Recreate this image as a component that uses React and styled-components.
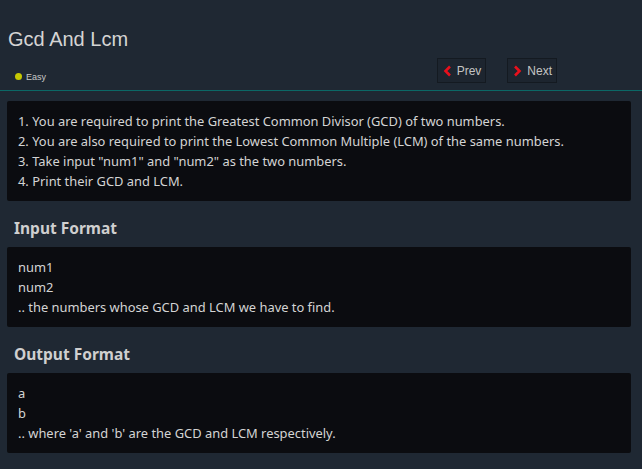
import React from "react";
import styled, { createGlobalStyle } from "styled-components";

const GlobalStyle = createGlobalStyle`
  body {
    margin: 0;
    background: #1f2833;
    font-family: "Noto Sans", "Open Sans", sans-serif;
  }
`;

const Page = styled.div`
  width: 642px;
  min-height: 469px;
  background: #1f2833;
  color: #d6d6d6;
`;

const Header = styled.div`
  padding: 27px 0 0 0;
`;

const Title = styled.h1`
  margin: 0 0 0 8px;
  font-family: "Liberation Sans", Arial, sans-serif;
  font-weight: 400;
  font-size: 20px;
  line-height: 24px;
  color: #d4d4d4;
`;

const MetaRow = styled.div`
  display: flex;
  align-items: center;
  justify-content: space-between;
  margin-top: 7px;
  padding: 0 85px 7px 15px;
  border-bottom: 1px solid #0b6866;
`;

const Level = styled.div`
  display: flex;
  align-items: center;
  gap: 4px;
  padding-top: 12px;
  font-family: "Liberation Sans", Arial, sans-serif;
  font-size: 9px;
  color: #c8c8c8;
`;

const Dot = styled.span`
  width: 7px;
  height: 7px;
  border-radius: 50%;
  background: ${(props) => props.color};
`;

const Nav = styled.div`
  display: flex;
  gap: 21px;
`;

const NavButton = styled.button`
  display: flex;
  align-items: center;
  gap: 5px;
  height: 25px;
  padding: 0 4px 0 5px;
  background: #1d252f;
  border: 1px solid #141a21;
  color: #c4c4c4;
  font-family: "Liberation Sans", Arial, sans-serif;
  font-size: 12px;
  cursor: pointer;
`;

const Content = styled.div`
  padding: 10px 11px 0 7px;
`;

const Box = styled.div`
  background: #0b0c10;
  border-radius: 2px;
  padding: 10px 11px;
  font-size: 12.9px;
  line-height: 20px;
  color: #d4d4d4;
`;

const Line = styled.div`
  white-space: nowrap;
`;

const Heading = styled.h3`
  margin: 17px 0 9px 7px;
  font-size: 15.5px;
  line-height: 20px;
  font-weight: 700;
  color: #cfcfcf;
`;

const Chevron = ({ dir }) => (
  <svg width="9" height="12" viewBox="0 0 9 12">
    <path
      d={dir === "left" ? "M7 1.5 L2.5 6 L7 10.5" : "M2 1.5 L6.5 6 L2 10.5"}
      fill="none"
      stroke="#e8101c"
      strokeWidth="2.6"
    />
  </svg>
);

const Section = ({ label, lines }) => (
  <>
    {label && <Heading>{label}</Heading>}
    <Box>
      {lines.map((l, i) => (
        <Line key={i}>{l}</Line>
      ))}
    </Box>
  </>
);

export default function App() {
  return (
    <Page>
      <GlobalStyle />
      <Header>
        <Title>Gcd And Lcm</Title>
        <MetaRow>
          <Level>
            <Dot color="#c5c803" />
            Easy
          </Level>
          <Nav>
            <NavButton>
              <Chevron dir="left" />
              Prev
            </NavButton>
            <NavButton>
              <Chevron dir="right" />
              Next
            </NavButton>
          </Nav>
        </MetaRow>
      </Header>
      <Content>
        <Section
          lines={[
            "1. You are required to print the Greatest Common Divisor (GCD) of two numbers.",
            "2. You are also required to print the Lowest Common Multiple (LCM) of the same numbers.",
            '3. Take input "num1" and "num2" as the two numbers.',
            "4. Print their GCD and LCM.",
          ]}
        />
        <Section
          label="Input Format"
          lines={["num1", "num2", ".. the numbers whose GCD and LCM we have to find."]}
        />
        <Section
          label="Output Format"
          lines={["a", "b", ".. where 'a' and 'b' are the GCD and LCM respectively."]}
        />
      </Content>
    </Page>
  );
}
